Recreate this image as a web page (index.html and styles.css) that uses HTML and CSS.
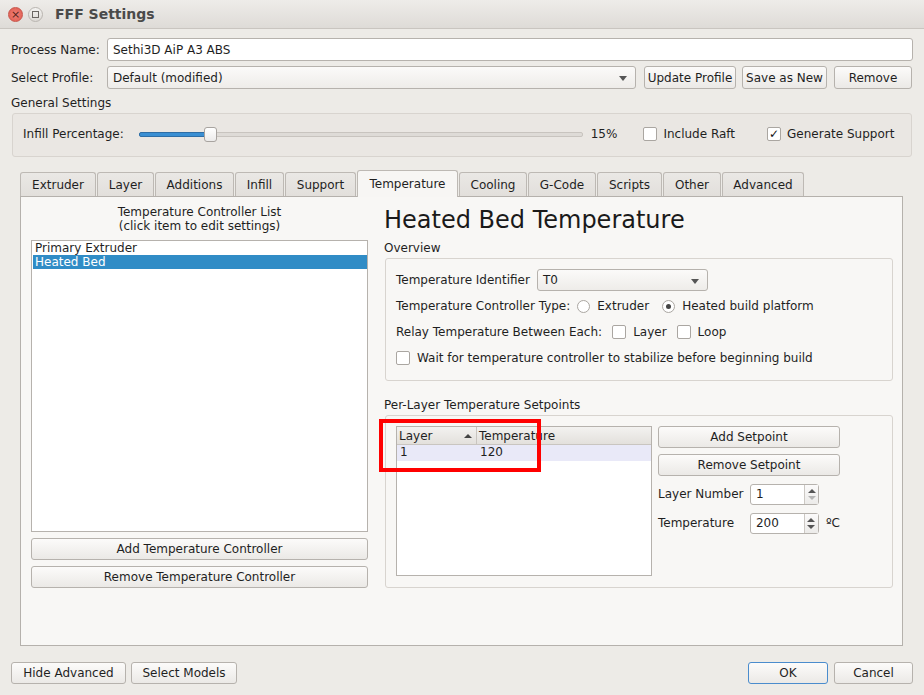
FILE: index.html
```html
<!DOCTYPE html>
<html>
<head>
<meta charset="utf-8">
<link rel="stylesheet" href="styles.css">
</head>
<body>
<div class="window">
  <div class="titlebar">
    <span class="wbtn close">×</span>
    <span class="wbtn max"><span class="sq"></span></span>
    <span class="wtitle">FFF Settings</span>
  </div>
  <div class="content">
    <div class="row r1">
      <span class="rlabel">Process Name:</span>
      <div class="input wide">Sethi3D AiP A3 ABS</div>
    </div>
    <div class="row r2">
      <span class="rlabel">Select Profile:</span>
      <div class="combo profile">Default (modified)<span class="arrow"></span></div>
      <button class="btn b-update">Update Profile</button>
      <button class="btn b-save">Save as New</button>
      <button class="btn b-remove">Remove</button>
    </div>
    <div class="seclabel">General Settings</div>
    <div class="group general">
      <span class="glabel">Infill Percentage:</span>
      <div class="slider"><div class="fill"></div><div class="rest"></div><div class="handle"></div></div>
      <span class="pct">15%</span>
      <span class="cb"></span><span class="cblabel raft">Include Raft</span>
      <span class="cb checked">✓</span><span class="cblabel">Generate Support</span>
    </div>

    <div class="tabwidget">
      <div class="tabbar">
        <span class="tab t1">Extruder</span>
        <span class="tab t2">Layer</span>
        <span class="tab t3">Additions</span>
        <span class="tab t4">Infill</span>
        <span class="tab t5">Support</span>
        <span class="tab t6 active">Temperature</span>
        <span class="tab t7">Cooling</span>
        <span class="tab t8">G-Code</span>
        <span class="tab t9">Scripts</span>
        <span class="tab t10">Other</span>
        <span class="tab t11">Advanced</span>
      </div>
      <div class="pane">
        <div class="leftcol">
          <div class="listtitle">Temperature Controller List<br>(click item to edit settings)</div>
          <div class="listbox">
            <div class="item">Primary Extruder</div>
            <div class="item sel">Heated Bed</div>
          </div>
          <button class="btn full b-add">Add Temperature Controller</button>
          <button class="btn full b-rem">Remove Temperature Controller</button>
        </div>
        <div class="rightcol">
          <div class="heading">Heated Bed Temperature</div>
          <div class="sublabel">Overview</div>
          <div class="group overview">
            <div class="orow">
              <span class="olabel">Temperature Identifier</span>
              <div class="combo tid">T0<span class="arrow"></span></div>
            </div>
            <div class="orow">
              <span class="olabel">Temperature Controller Type:</span>
              <span class="radio"></span><span class="oitem ext">Extruder</span>
              <span class="radio on"><span class="dot"></span></span><span class="oitem">Heated build platform</span>
            </div>
            <div class="orow relay">
              <span class="olabel">Relay Temperature Between Each:</span>
              <span class="cb"></span><span class="oitem layer">Layer</span>
              <span class="cb"></span><span class="oitem">Loop</span>
            </div>
            <div class="orow wait">
              <span class="cb"></span><span class="oitem">Wait for temperature controller to stabilize before beginning build</span>
            </div>
          </div>
          <div class="sublabel sp">Per-Layer Temperature Setpoints</div>
          <div class="group setpoints">
            <div class="table">
              <div class="thead">
                <span class="th c1">Layer<span class="sortarrow"></span></span>
                <span class="th c2">Temperature</span>
              </div>
              <div class="trow">
                <span class="td c1">1</span>
                <span class="td c2">120</span>
              </div>
              <div class="redbox"></div>
            </div>
            <div class="spside">
              <button class="btn spbtn">Add Setpoint</button>
              <button class="btn spbtn">Remove Setpoint</button>
              <div class="sprow">
                <span class="splabel">Layer Number</span>
                <div class="spin"><span class="val">1</span><span class="arrows"><span class="up"></span><span class="down dis"></span></span></div>
              </div>
              <div class="sprow">
                <span class="splabel">Temperature</span>
                <div class="spin"><span class="val">200</span><span class="arrows"><span class="up"></span><span class="down"></span></span></div>
                <span class="unit">ºC</span>
              </div>
            </div>
          </div>
        </div>
      </div>
    </div>

    <div class="footer">
      <button class="btn f-hide">Hide Advanced</button>
      <button class="btn f-sel">Select Models</button>
      <span class="spacer"></span>
      <button class="btn f-ok">OK</button>
      <button class="btn f-cancel">Cancel</button>
    </div>
  </div>
</div>
</body>
</html>
```
FILE: styles.css
```css
* { box-sizing: border-box; }
html, body { margin: 0; padding: 0; }
body {
  width: 924px; height: 695px; overflow: hidden;
  background: #edebe7;
  font-family: "DejaVu Sans", sans-serif;
  font-size: 12px;
  color: #1f1f1f;
}
.window { width: 924px; height: 695px; }

.titlebar {
  height: 29px;
  display: flex; align-items: center;
  background: linear-gradient(#eeece9, #dedbd7);
  border-bottom: 1px solid #c9c5c0;
  padding-left: 8px;
}
.wbtn {
  width: 15px; height: 15px; border-radius: 50%;
  display: flex; align-items: center; justify-content: center;
  font-size: 11px; line-height: 1;
}
.close { background: radial-gradient(#f08277, #e0594e); border: 1px solid #c7544a; color: #5a1f1a; }
.max { margin-left: 5px; background: linear-gradient(#f4f3f1, #dcd9d5); border: 1px solid #b9b5b0; }
.max .sq { width: 7px; height: 7px; border: 1px solid #6a6662; }
.wtitle { margin-left: 12px; font-weight: bold; font-size: 14px; color: #4a4a4a; }

.content { padding: 0 11px 0 11px; }
.row { display: flex; align-items: center; height: 23px; }
.r1 { margin-top: 9px; }
.r2 { margin-top: 5px; }
.rlabel { width: 96px; }
.input {
  height: 23px; border: 1px solid #b6b2ad; border-radius: 3px; background: #fff;
  padding-left: 5px; display: flex; align-items: center;
}
.wide { width: 806px; }
.combo {
  height: 23px; border: 1px solid #b6b2ad; border-radius: 3px;
  background: linear-gradient(#fbfaf9, #eeece9);
  padding-left: 5px; display: flex; align-items: center; position: relative;
}
.profile { width: 529px; }
.arrow {
  position: absolute; right: 8px; top: 9px;
  width: 0; height: 0;
  border-left: 4px solid transparent; border-right: 4px solid transparent;
  border-top: 5px solid #555;
}
.btn {
  font-family: inherit; font-size: 12px; color: #1f1f1f;
  height: 23px; padding: 0;
  border: 1px solid #b6b2ad; border-radius: 3px;
  background: linear-gradient(#fcfbfa, #ebe9e6);
}
.b-update { margin-left: 8px; width: 92px; }
.b-save { margin-left: 6px; width: 85px; }
.b-remove { margin-left: 7px; width: 78px; }

.seclabel { margin-top: 7px; height: 15px; line-height: 15px; }
.group { border: 1px solid #d8d4cf; border-radius: 3px; }
.general {
  margin-top: 2px; margin-left: 1px; width: 900px; height: 44px;
  display: flex; align-items: center; padding-left: 10px; padding-bottom: 2px;
  background: #eae7e3;
}
.slider { position: relative; width: 444px; height: 14px; margin-left: 15px; }
.slider .fill { position: absolute; left: 0; top: 5px; width: 70px; height: 5px; background: #3a8fd3; border: 1px solid #2e6ea6; border-radius: 2px; }
.slider .rest { position: absolute; left: 70px; right: 0; top: 5px; height: 5px; background: #dedbd7; border: 1px solid #c8c4bf; border-radius: 2px; }
.slider .handle { position: absolute; left: 65px; top: 0; width: 13px; height: 15px; border: 1px solid #a8a4a0; border-radius: 3px; background: linear-gradient(#fff, #ecebea); }
.pct { margin-left: 8px; }
.cb {
  width: 14px; height: 14px; border: 1px solid #aaa6a1; border-radius: 2px; background: #fff;
  display: inline-flex; align-items: center; justify-content: center; font-size: 12px; line-height: 1; font-weight: bold; color: #111;
}
.general .cb { margin-left: 26px; }
.cblabel { margin-left: 6px; }
.general .cblabel.raft { margin-right: 13px; }
.general .cb.checked { margin-left: 19px; }

.tabwidget { margin-top: 14px; margin-left: 9px; width: 883px; }
.tabbar { display: flex; align-items: flex-end; height: 25px; position: relative; z-index: 1; }
.tab {
  height: 24px; display: flex; align-items: center; justify-content: center;
  border: 1px solid #bdb9b4; border-bottom: none; border-radius: 3px 3px 0 0;
  background: linear-gradient(#eae8e5, #e2dfdb);
  margin-right: 1px;
}
.tab.active { background: #f7f6f4; margin-bottom: -1px; height: 27px; }
.t1 { width: 76px; } .t2 { width: 57px; } .t3 { width: 79px; } .t4 { width: 49px; }
.t5 { width: 71px; } .t6 { width: 101px; } .t7 { width: 68px; } .t8 { width: 68px; }
.t9 { width: 65px; } .t10 { width: 58px; } .t11 { width: 82px; }

.pane {
  height: 450px; border: 1px solid #b5b1ac; background: #f8f7f5;
  display: flex; padding: 8px 10px 0 10px;
}
.leftcol { width: 337px; display: flex; flex-direction: column; }
.listtitle { text-align: center; line-height: 14px; height: 35px; padding-top: 0; }
.listbox { height: 292px; border: 1px solid #b6b2ad; background: #fff; padding: 0 0 0 1px; }
.item { height: 14px; line-height: 14px; padding-left: 2px; }
.item.sel { background: #308cc6; color: #fff; }
.full { width: 337px; height: 22px; }
.b-add { margin-top: 6px; }
.b-rem { margin-top: 6px; }

.rightcol { margin-left: 16px; width: 508px; display: flex; flex-direction: column; }
.heading { font-size: 24px; line-height: 28px; height: 30px; margin-top: 1px; color: #1a1a1a; }
.sublabel { height: 14px; line-height: 14px; margin-top: 5px; }
.sublabel.sp { margin-top: 17px; }
.overview {
  margin-top: 3px; margin-left: 1px; width: 508px; height: 123px;
  padding: 10px 0 0 10px; display: flex; flex-direction: column;
}
.orow { height: 22px; display: flex; align-items: center; margin-bottom: 4px; }
.olabel { margin-right: 7px; }
.tid { width: 171px; height: 22px; }
.radio {
  width: 13px; height: 13px; border-radius: 50%; border: 1px solid #aaa6a1; background: #fff;
  display: inline-flex; align-items: center; justify-content: center; margin-left: 2px;
}
.relay .olabel, .orow .olabel { margin-right: 5px; }
.orow:first-child .olabel { margin-right: 7px; }
.radio .dot { width: 5px; height: 5px; border-radius: 50%; background: #444; }
.oitem { margin-left: 7px; }
.oitem.ext { margin-right: 11px; }
.relay .cb { margin-left: 5px; }
.oitem.layer { margin-right: 5px; }
.wait .cb { margin-left: 0; }

.setpoints {
  margin-top: 3px; margin-left: 1px; width: 508px; height: 173px;
  padding: 10px 0 0 10px; display: flex; align-items: flex-start;
}
.table { position: relative; width: 256px; height: 150px; border: 1px solid #b6b2ad; background: #fff; }
.thead { display: flex; height: 18px; background: linear-gradient(#f3f2f0, #e3e0dc); border-bottom: 1px solid #c9c5c0; }
.th { display: flex; align-items: center; padding-left: 2px; position: relative; }
.th.c1 { width: 80px; border-right: 1px solid #c9c5c0; }
.sortarrow {
  position: absolute; right: 4px; top: 7px;
  border-left: 4px solid transparent; border-right: 4px solid transparent; border-bottom: 4px solid #444;
}
.trow { display: flex; height: 16px; background: #e9e9f8; }
.td { padding-left: 3px; line-height: 14px; }
.td.c1 { width: 80px; }
.redbox {
  position: absolute; left: -18px; top: -8px; width: 162px; height: 53px;
  border: 4px solid #ff0000;
}
.spside { margin-left: 6px; width: 182px; display: flex; flex-direction: column; }
.spbtn { width: 182px; height: 22px; margin-bottom: 6px; }
.sprow { display: flex; align-items: center; height: 20px; margin-top: 2px; margin-bottom: 7px; }
.splabel { width: 92px; }
.spin {
  width: 69px; height: 21px; border: 1px solid #b6b2ad; border-radius: 3px; background: #fff;
  display: flex; align-items: center; justify-content: space-between; padding-left: 5px;
}
.arrows {
  width: 14px; height: 19px; border-left: 1px solid #ccc8c3; background: linear-gradient(#fbfafa, #ecebe9);
  display: flex; flex-direction: column; align-items: center; justify-content: center; gap: 3px;
}
.arrows .up { border-left: 4px solid transparent; border-right: 4px solid transparent; border-bottom: 4px solid #555; }
.arrows .down { border-left: 4px solid transparent; border-right: 4px solid transparent; border-top: 4px solid #555; }
.arrows .down.dis { border-top-color: #b5b5b5; }
.unit { margin-left: 7px; }

.footer { display: flex; align-items: center; margin-top: 16px; height: 22px; }
.footer .btn { height: 22px; }
.f-hide { width: 115px; }
.f-sel { width: 106px; margin-left: 5px; }
.spacer { flex: 1; }
.f-ok { width: 80px; border-color: #4a8ccd; }
.f-cancel { width: 79px; margin-left: 6px; }
```
